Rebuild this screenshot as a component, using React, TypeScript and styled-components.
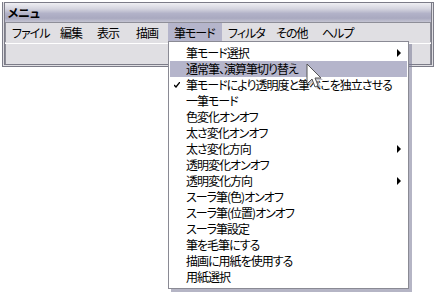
import React from "react";
import styled, { createGlobalStyle } from "styled-components";

const GlobalStyle = createGlobalStyle`
  html, body {
    margin: 0;
    padding: 0;
    background: #ffffff;
  }
  body {
    font-family: "Noto Sans CJK JP", "MS UI Gothic", sans-serif;
    font-size: 12px;
    color: #000;
  }
`;

const Page = styled.div`
  position: relative;
  width: 437px;
  height: 294px;
  overflow: hidden;
  background: #ffffff;
  padding: 2px 0 0 2px;
  box-sizing: border-box;
`;

const Window = styled.div`
  width: 432px;
  height: 65px;
  box-sizing: border-box;
  border: 3px double #7c7c88;
  border-top-width: 1px;
  border-top-style: solid;
  background: #e0dfe3;
  display: flex;
  flex-direction: column;
`;

const TitleBar = styled.div`
  height: 18px;
  line-height: 18px;
  padding: 1px 0 0 2px;
  font-weight: bold;
  font-size: 12px;
  background: linear-gradient(
    to bottom,
    #efeff3 0%,
    #d6d6e0 30%,
    #b2b2c8 55%,
    #a9a9c0 80%,
    #c4c4d2 100%
  );
  letter-spacing: -1px;
`;

const MenuBar = styled.div`
  display: flex;
  height: 20px;
  box-sizing: border-box;
  border: 1px solid #8e8e98;
  border-bottom: none;
  background: #e0dfe3;
`;

const MenuBarItem = styled.div<{ $active?: boolean; $w: number }>`
  width: ${(p) => p.$w}px;
  box-sizing: border-box;
  padding-left: 6px;
  height: 19px;
  line-height: 19px;
  white-space: nowrap;
  letter-spacing: -1px;
  font-feature-settings: "palt";
  background: ${(p) => (p.$active ? "#b5b5cb" : "transparent")};
`;

const Separator = styled.div`
  height: 1px;
  background: #ffffff;
  margin-top: 1px;
`;

const ClientArea = styled.div`
  flex: 1;
  border-left: 1px solid #8e8e98;
  border-right: 1px solid #8e8e98;
`;

const Dropdown = styled.div`
  position: absolute;
  left: 168px;
  top: 41px;
  width: 241px;
  box-sizing: border-box;
  padding: 3px 1px 3px 1px;
  background: #ffffff;
  border: 1px solid #8a8a94;
  box-shadow: 3px 3px 0 rgba(120, 120, 150, 0.55);
`;

const DropItem = styled.div<{ $active?: boolean }>`
  position: relative;
  display: flex;
  align-items: center;
  height: 16px;
  line-height: 16px;
  padding-left: 16px;
  white-space: nowrap;
  letter-spacing: -1px;
  font-feature-settings: "palt";
  background: ${(p) => (p.$active ? "#b5b5cb" : "transparent")};
`;

const Check = styled.svg`
  position: absolute;
  left: 4px;
  top: 5px;
`;

const Arrow = styled.svg`
  position: absolute;
  right: 6px;
  top: 4px;
`;

const Cursor = styled.svg`
  position: absolute;
  left: 306px;
  top: 63px;
`;

const menuBar: { label: string; w: number }[] = [
  { label: "ファイル", w: 48 },
  { label: "編集", w: 37 },
  { label: "表示", w: 39 },
  { label: "描画", w: 38 },
  { label: "筆モード", w: 54 },
  { label: "フィルタ", w: 48 },
  { label: "その他", w: 46 },
  { label: "ヘルプ", w: 46 },
];

const items: { label: string; sub?: boolean; checked?: boolean; active?: boolean }[] = [
  { label: "筆モード選択", sub: true },
  { label: "通常筆、演算筆切り替え", active: true },
  { label: "筆モードにより透明度と筆べこを独立させる", checked: true },
  { label: "一筆モード" },
  { label: "色変化オンオフ" },
  { label: "太さ変化オンオフ" },
  { label: "太さ変化方向", sub: true },
  { label: "透明変化オンオフ" },
  { label: "透明変化方向", sub: true },
  { label: "スーラ筆(色)オンオフ" },
  { label: "スーラ筆(位置)オンオフ" },
  { label: "スーラ筆設定" },
  { label: "筆を毛筆にする" },
  { label: "描画に用紙を使用する" },
  { label: "用紙選択" },
];

export default function App() {
  return (
    <Page>
      <GlobalStyle />
      <Window>
        <TitleBar>メニュ</TitleBar>
        <MenuBar>
          {menuBar.map((m) => (
            <MenuBarItem key={m.label} $w={m.w} $active={m.label === "筆モード"}>
              {m.label}
            </MenuBarItem>
          ))}
        </MenuBar>
        <Separator />
        <ClientArea />
      </Window>
      <Dropdown>
        {items.map((it) => (
          <DropItem key={it.label} $active={it.active}>
            {it.checked && (
              <Check width="6" height="6" viewBox="0 0 6 6">
                <path d="M0 3 L2 5 L6 0" stroke="#000" strokeWidth="1.4" fill="none" />
              </Check>
            )}
            {it.label}
            {it.sub && (
              <Arrow width="4" height="8" viewBox="0 0 4 8">
                <path d="M0 0 L4 4 L0 8 Z" fill="#000" />
              </Arrow>
            )}
          </DropItem>
        ))}
      </Dropdown>
      <Cursor width="22" height="30" viewBox="0 0 22 30">
        <path d="M3 3 L3 23 L8 18 L11 26 L15 24 L11 17 L17 17 Z" fill="rgba(80,80,110,0.35)" />
        <path d="M1 1 L1 21 L6 16 L9 24 L12 22.5 L9 15 L15 15 Z" fill="#ffffff" stroke="#555" strokeWidth="1" strokeLinejoin="round" />
      </Cursor>
    </Page>
  );
}
